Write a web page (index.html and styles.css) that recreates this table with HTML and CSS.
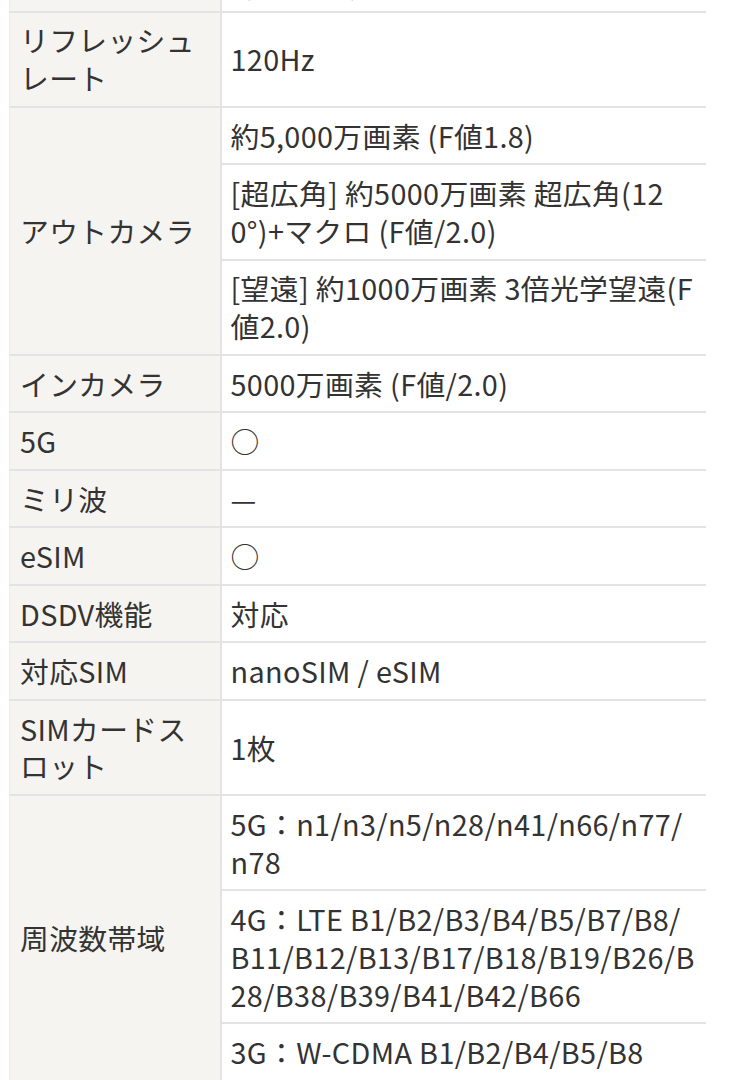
FILE: index.html
```html
<!DOCTYPE html>
<html lang="ja">
<head>
<meta charset="utf-8">
<title>スペック</title>
<link rel="stylesheet" href="styles.css">
</head>
<body>
<table class="spec">
  <colgroup><col class="col-label"><col class="col-value"></colgroup>
  <tbody>
    <tr><th>解像度</th><td>1,080×2,400</td></tr>
    <tr><th>リフレッシュレート</th><td>120Hz</td></tr>
    <tr><th rowspan="3">アウトカメラ</th><td>約5,000万画素 (F値1.8)</td></tr>
    <tr><td>[超広角] 約5000万画素 超広角(120°)+マクロ (F値/2.0)</td></tr>
    <tr><td>[望遠] 約1000万画素 3倍光学望遠(F値2.0)</td></tr>
    <tr><th>インカメラ</th><td>5000万画素 (F値/2.0)</td></tr>
    <tr><th>5G</th><td>○</td></tr>
    <tr><th>ミリ波</th><td>—</td></tr>
    <tr><th>eSIM</th><td>○</td></tr>
    <tr><th>DSDV機能</th><td>対応</td></tr>
    <tr><th>対応SIM</th><td>nanoSIM / eSIM</td></tr>
    <tr><th>SIMカードスロット</th><td>1枚</td></tr>
    <tr><th rowspan="3">周波数帯域</th><td>5G：n1/n3/n5/n28/n41/n66/n77/n78</td></tr>
    <tr><td>4G：LTE B1/B2/B3/B4/B5/B7/B8/B11/B12/B13/B17/B18/B19/B26/B28/B38/B39/B41/B42/B66</td></tr>
    <tr><td>3G：W-CDMA B1/B2/B4/B5/B8</td></tr>
  </tbody>
</table>
</body>
</html>
```

FILE: styles.css
```css
html, body {
  margin: 0;
  padding: 0;
  background: #ffffff;
}

body {
  font-family: "Noto Sans CJK JP", "Noto Sans", sans-serif;
  font-size: 28.8px;
  line-height: 37.75px;
  letter-spacing: 0.35px;
  color: #333333;
  overflow: hidden;
}

.spec {
  border-collapse: collapse;
  table-layout: fixed;
  width: 697px;
  margin: -47px 0 0 9px;
}

.col-label {
  width: 211px;
}

.spec th,
.spec td {
  border-top: 2px solid #e3e3e3;
  border-bottom: 2px solid #e3e3e3;
  vertical-align: middle;
  text-align: left;
}

.spec th {
  font-weight: 400;
  background: #f5f4f1;
  border-right: 2px solid #e3e3e3;
  border-left: 1px solid #ececec;
  padding: 8.875px 10px;
}

.spec td {
  background: #ffffff;
  padding: 8.875px 11px 8.875px 9px;
  word-break: break-all;
}
```
